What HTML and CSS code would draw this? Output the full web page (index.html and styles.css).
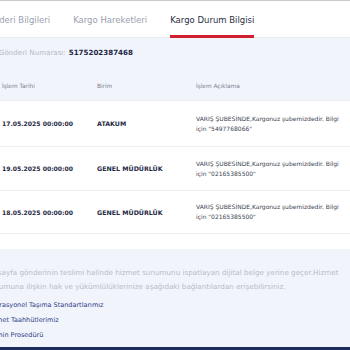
FILE: index.html
```html
<!DOCTYPE html>
<html lang="tr">
<head>
<meta charset="utf-8">
<link rel="stylesheet" href="styles.css">
</head>
<body>
<div class="page">
  <nav class="tabs">
    <span class="tab">Gönderi Bilgileri</span>
    <span class="tab">Kargo Hareketleri</span>
    <span class="tab active">Kargo Durum Bilgisi</span>
  </nav>
  <section class="content">
    <p class="number"><span class="label">Gönderi Numarası:</span> <b>5175202387468</b></p>
    <div class="table">
      <div class="row head">
        <span>İşlem Tarihi</span><span>Birim</span><span>İşlem Açıklama</span>
      </div>
      <div class="row first">
        <span class="date">17.05.2025 00:00:00</span><span class="unit">ATAKUM</span><span class="desc">VARIŞ ŞUBESİNDE,Kargonuz şubemizdedir. Bilgi için "5497768066"</span>
      </div>
      <div class="row">
        <span class="date">19.05.2025 00:00:00</span><span class="unit">GENEL MÜDÜRLÜK</span><span class="desc">VARIŞ ŞUBESİNDE,Kargonuz şubemizdedir. Bilgi için "02165385500"</span>
      </div>
      <div class="row last">
        <span class="date">18.05.2025 00:00:00</span><span class="unit">GENEL MÜDÜRLÜK</span><span class="desc">VARIŞ ŞUBESİNDE,Kargonuz şubemizdedir. Bilgi için "02165385500"</span>
      </div>
    </div>
    <p class="info">Bu sayfa gönderinin teslimi halinde hizmet sunumunu ispatlayan dijital belge yerine geçer.Hizmet sunumuna ilişkin hak ve yükümlülüklerinize aşağıdaki bağlantılardan erişebilirsiniz.</p>
    <ul class="links">
      <li>Operasyonel Taşıma Standartlarımız</li>
      <li>Hizmet Taahhütlerimiz</li>
      <li>Tazmin Prosedürü</li>
    </ul>
  </section>
  <footer class="bar"></footer>
</div>
</body>
</html>
```
FILE: styles.css
```css
html, body {
  margin: 0;
  padding: 0;
}
body {
  background: #f1f4fa;
  font-family: "DejaVu Sans", sans-serif;
  width: 350px;
  height: 350px;
  overflow: hidden;
  border-top: 1px solid #c9c9c9;
}
.page {
  margin-left: -14px;
  display: flex;
  flex-direction: column;
}
.tabs {
  background: #fff;
  height: 37px;
  box-sizing: border-box;
  display: flex;
  gap: 23px;
  padding-left: 0;
  margin-left: -4px;
  border-bottom: 1px solid #e8ebf2;
}
.tab {
  font-size: 8.5px;
  color: #9aa0ae;
  display: flex;
  align-items: center;
  border-bottom: 3px solid transparent;
  margin-bottom: -1px;
  padding-top: 3px;
}
.tab.active {
  color: #2b2f40;
  border-bottom-color: #d0202e;
}
.content {
  display: flex;
  flex-direction: column;
}
.number {
  margin: 0 0 3px;
  padding: 7px 0 0 13px;
  height: 14px;
  font-size: 7.1px;
  display: flex;
  align-items: center;
  gap: 3px;
}
.number .label {
  color: #b5b9c6;
}
.number b {
  color: #1f2747;
}
.table {
  background: #fff;
  padding-bottom: 15px;
}
.row {
  display: grid;
  grid-template-columns: 95px 99px 1fr;
  align-items: center;
  padding-left: 16px;
  border-bottom: 1px solid #eef0f5;
  height: 44px;
  box-sizing: border-box;
}
.row.first {
  height: 46px;
}
.row.last {
  height: 43px;
}
.row.head {
  background: #f1f4fa;
  height: 39px;
  font-size: 5.8px;
  color: #7c8192;
  padding-top: 10px;
  border-bottom: 1px solid #e9ecf3;
}
.date {
  font-size: 6.1px;
  font-weight: bold;
  color: #1f2a44;
}
.unit {
  font-size: 6.3px;
  font-weight: bold;
  color: #1f2a44;
}
.desc {
  font-size: 6px;
  line-height: 10px;
  color: #3a3f52;
  padding-right: 4px;
}
.info {
  margin: 0;
  padding: 17px 4px 0 0;
  font-size: 7.2px;
  line-height: 14px;
  color: #b8bcc9;
}
.links {
  list-style: none;
  margin: 0;
  padding: 4px 0 0 0;
  font-size: 6.5px;
  line-height: 15px;
  color: #2e3d8a;
}
.bar {
  margin-top: 4px;
  height: 10px;
  background: #1d2b5e;
}
```
